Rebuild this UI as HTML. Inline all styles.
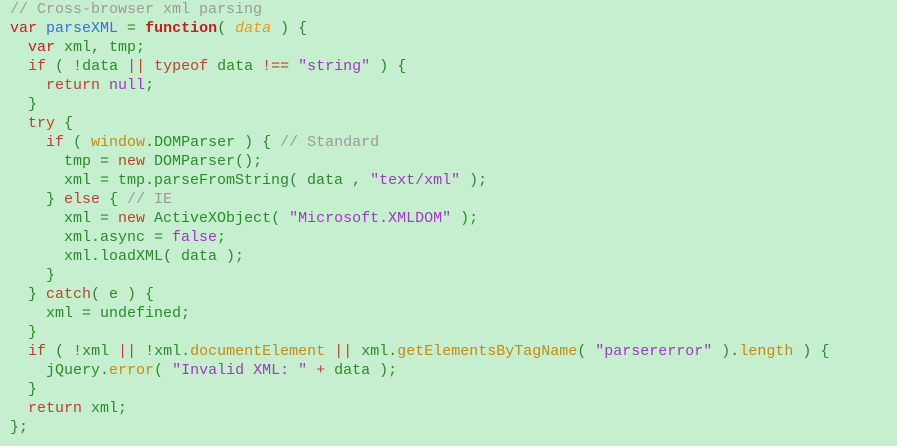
<!DOCTYPE html>
<html><head><meta charset="utf-8"><style>
html,body{margin:0;padding:0;background:#c6efcf;width:897px;height:446px;overflow:hidden}
pre{margin:0;padding:0 0 0 10px;font-family:"Liberation Mono",monospace;font-size:15px;line-height:19px;color:#2b8a2b;white-space:pre}
.k{color:#b8432e}.kb{color:#c01f1f;font-weight:bold}.c{color:#9a9a9a}.b{color:#3a6fd8}.p{color:#f0961a;font-style:italic}
.s{color:#9b3bbd}.o{color:#c58a12}.v{color:#c01f1f}
</style></head><body><pre><span class="c">// Cross-browser xml parsing</span>
<span class="v">var</span> <span class="b">parseXML</span> = <span class="kb">function</span>( <span class="p">data</span> ) {
  <span class="v">var</span> xml, tmp;
  <span class="k">if</span> ( <span class="k">!</span>data <span class="k">||</span> <span class="k">typeof</span> data <span class="k">!==</span> <span class="s">"string"</span> ) {
    <span class="k">return</span> <span class="s">null</span>;
  }
  <span class="k">try</span> {
    <span class="k">if</span> ( <span class="o">window</span>.DOMParser ) { <span class="c">// Standard</span>
      tmp = <span class="k">new</span> DOMParser();
      xml = tmp.parseFromString( data , <span class="s">"text/xml"</span> );
    } <span class="k">else</span> { <span class="c">// IE</span>
      xml = <span class="k">new</span> ActiveXObject( <span class="s">"Microsoft.XMLDOM"</span> );
      xml.async = <span class="s">false</span>;
      xml.loadXML( data );
    }
  } <span class="k">catch</span>( e ) {
    xml = undefined;
  }
  <span class="k">if</span> ( <span class="k">!</span>xml <span class="k">||</span> <span class="k">!</span>xml.<span class="o">documentElement</span> <span class="k">||</span> xml.<span class="o">getElementsByTagName</span>( <span class="s">"parsererror"</span> ).<span class="o">length</span> ) {
    jQuery.<span class="o">error</span>( <span class="s">"Invalid XML: "</span> <span class="k">+</span> data );
  }
  <span class="k">return</span> xml;
};</pre></body></html>
